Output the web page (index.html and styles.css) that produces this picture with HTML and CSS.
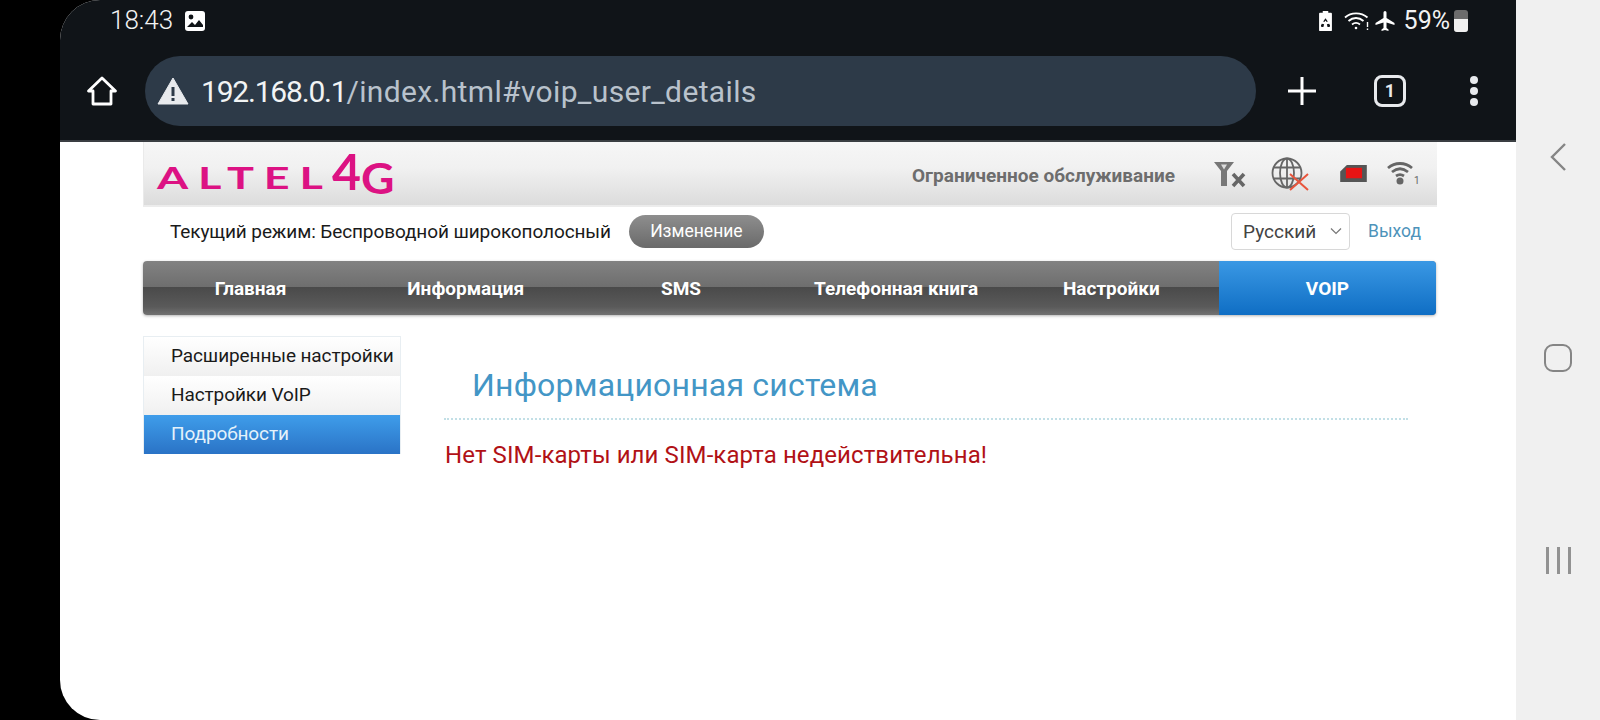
FILE: index.html
```html
<!DOCTYPE html>
<html lang="en">
<head>
    <meta charset="UTF-8">
    <title>Altel 4G - VoIP</title>
    <link rel="stylesheet" href="styles.css">
</head>
<body>

<div class="screen">
    <div class="chrome">
        <div class="status-bar">
            <div class="status-left">
                <span class="clock">18:43</span>
                <svg class="pic-icon" viewBox="0 0 22 22"><rect x="1" y="1" width="20" height="20" rx="3" fill="#fff"/><circle cx="7" cy="7" r="2.4" fill="#101418"/><path d="M3 17l5-5 3 3 4-5 4 5v2H3z" fill="#101418"/></svg>
            </div>
            <div class="status-right">
                <svg class="saver-icon" viewBox="0 0 16 24"><path d="M5 1h6v2h3a1 1 0 0 1 1 1v18a1 1 0 0 1-1 1H2a1 1 0 0 1-1-1V4a1 1 0 0 1 1-1h3z" fill="#fff"/><path d="M8 9l2.500 3.500-1.200.5L8 11.500 6.700 13l-1.200-.5zM4 15l2.500.5-.8 3H3.500L3 17zM12 15l1 2-.5 1.500h-2.300l-.7-3z" fill="#101418"/></svg>
                <svg class="wifi-icon" viewBox="0 0 26 20" fill="none" stroke="#fff" stroke-width="1.800"><path d="M1 6.500C7 1 17 1 23.500 6.500"/><path d="M4.500 10C9 6 15 6 19.500 10"/><path d="M8 13.500c2.500-2 5.500-2 8 0"/><circle cx="12" cy="17" r="1.300" fill="#fff" stroke="none"/><path d="M23.500 11v5M23.500 17.500v1.500" stroke-width="1.400"/></svg>
                <svg class="plane-icon" viewBox="0 0 24 24"><path d="M21 16v-2l-8-5V3.500a1.500 1.500 0 0 0-3 0V9l-8 5v2l8-2.500V19l-2 1.500V22l3.500-1 3.500 1v-1.500L13 19v-5.500z" fill="#fff" transform="translate(0.500 0)"/></svg>
                <span class="battery-text">59%</span>
                <div class="battery"><div class="battery-fill"></div></div>
            </div>
        </div>
        <div class="toolbar">
            <svg class="home-icon" viewBox="0 0 32 32" fill="none" stroke="#fff" stroke-width="2.800" stroke-linejoin="round"><path d="M16 3L2.500 16H7v13h18V16h4.500z"/></svg>
            <div class="url-bar">
                <svg class="warn-icon" viewBox="0 0 32 28"><path d="M16 1L31 27H1z" fill="#e8eaed" stroke="#e8eaed" stroke-linejoin="round"/><path d="M14.500 10h3v9h-3zM14.500 21h3v3h-3z" fill="#2d3a48"/></svg>
                <span class="url"><span class="url-host">192.168.0.1</span>/index.html#voip_user_details</span>
            </div>
            <svg class="plus-icon" viewBox="0 0 30 30" stroke="#fff" stroke-width="3"><path d="M15 1v28M1 15h28"/></svg>
            <div class="tab-count">1</div>
            <div class="menu-dots"><span></span><span></span><span></span></div>
        </div>
    </div>

    <div class="page">
        <div class="logo-bar">
            <div class="logo"><span class="logo-name">ALTEL</span><span class="logo-four">4</span><span class="logo-g">G</span></div>
            <div class="signal-info">
                <span class="service-text">Ограниченное обслуживание</span>
                <svg class="sig-icon" viewBox="0 0 32 28"><path d="M0 2h20l-7 9v15H7V11z" fill="#777"/><path d="M7 4.500l3 5 3-5z" fill="#ddd"/><path d="M19 14l11 12M30 14L19 26" stroke="#666" stroke-width="3.600"/></svg>
                <svg class="globe-icon" viewBox="0 0 42 34" fill="none" stroke="#666" stroke-width="1.800"><circle cx="16" cy="16" r="14.500"/><ellipse cx="16" cy="16" rx="7" ry="14.500"/><path d="M16 1.500v29M3 10.500h26M3 21.500h26"/><path d="M19 17l18 16M37 17L19 33" stroke="#e8553c" stroke-width="2"/></svg>
                <svg class="sim-icon" viewBox="0 0 30 20"><path d="M8 1h21v18H1V8z" fill="#555"/><rect x="7" y="4" width="17" height="11" fill="#e81414"/></svg>
                <svg class="wifi-small" viewBox="0 0 34 24" fill="none" stroke="#666" stroke-width="2.800"><path d="M1 7c7-6 17-6 24 0"/><path d="M5 11c5-4 11-4 16 0"/><path d="M9 15c3-2 5-2 8 0"/><circle cx="13" cy="20" r="3.500" fill="#666" stroke="none"/><text x="27" y="23" class="wifi-num">1</text></svg>
            </div>
        </div>

        <div class="mode-row">
            <span class="mode-text">Текущий режим: Беспроводной широкополосный</span>
            <button class="change-button">Изменение</button>
            <div class="lang-area">
                <div class="lang-select">Русский<svg class="chevron" viewBox="0 0 12 8" fill="none" stroke="#777" stroke-width="1.200"><path d="M1 1.500l5 5 5-5"/></svg></div>
                <a class="logout">Выход</a>
            </div>
        </div>

        <div class="main-nav">
            <div class="nav-item">Главная</div>
            <div class="nav-item">Информация</div>
            <div class="nav-item">SMS</div>
            <div class="nav-item">Телефонная книга</div>
            <div class="nav-item">Настройки</div>
            <div class="nav-item active">VOIP</div>
        </div>

        <div class="content">
            <div class="side-menu">
                <div class="side-item">Расширенные настройки</div>
                <div class="side-item">Настройки VoIP</div>
                <div class="side-item selected">Подробности</div>
            </div>
            <div class="details">
                <h1>Информационная система</h1>
                <p class="error-text">Нет SIM-карты или SIM-карта недействительна!</p>
            </div>
        </div>
    </div>
</div>

<div class="system-nav">
    <svg class="back-icon" viewBox="0 0 18 30" fill="none" stroke="#858585" stroke-width="2.400"><path d="M16 2L3 15l13 13"/></svg>
    <div class="home-button"></div>
    <div class="recents"><span></span><span></span><span></span></div>
</div>

</body>
</html>
```

FILE: styles.css
```css
* {
    box-sizing: border-box;
}

html, body {
    height: 720px;
    overflow: hidden;
}

body {
    margin: 0;
    background-color: #000;
    font-family: Roboto, "Liberation Sans", sans-serif;
    display: flex;
    padding-left: 60px;
}

.screen {
    width: 1456px;
    height: 720px;
    background-color: #fff;
    border-radius: 40px 0 0 40px;
    overflow: hidden;
    flex-shrink: 0;
}

/* Browser chrome */
.chrome {
    height: 142px;
    background-color: #101418;
    border-bottom: 2px solid #3a3e42;
}

.status-bar {
    height: 56px;
    display: flex;
    justify-content: space-between;
    padding: 6px 48px 0 50px;
}

.status-left, .status-right {
    display: flex;
    align-items: flex-start;
    color: #f2f2f2;
}

.clock {
    font-size: 26px;
    line-height: 29px;
    font-weight: 300;
}

.pic-icon {
    width: 22px;
    height: 22px;
    margin: 4px 0 0 11px;
}

.saver-icon {
    width: 15px;
    height: 22px;
    margin: 4px 11px 0 0;
}

.wifi-icon {
    width: 26px;
    height: 22px;
    margin: 4px 3px 0 0;
}

.plane-icon {
    width: 24px;
    height: 24px;
    margin: 3px 7px 0 0;
}

.battery-text {
    font-size: 25px;
    line-height: 29px;
}

.battery {
    width: 14px;
    height: 22px;
    margin: 4px 0 0 4px;
    background-color: #6c6c6c;
    border-radius: 3px;
    display: flex;
    align-items: flex-end;
    overflow: hidden;
}

.battery-fill {
    width: 100%;
    height: 59%;
    background-color: #f0f0f0;
}

.toolbar {
    height: 70px;
    display: flex;
    align-items: center;
}

.home-icon {
    width: 32px;
    height: 32px;
    margin-left: 26px;
    flex-shrink: 0;
}

.url-bar {
    width: 1111px;
    height: 70px;
    margin-left: 27px;
    background-color: #2d3a48;
    border-radius: 35px;
    display: flex;
    align-items: center;
    padding-left: 12px;
}

.warn-icon {
    width: 32px;
    height: 28px;
    flex-shrink: 0;
}

.url {
    margin-left: 12px;
    font-size: 30px;
    letter-spacing: 0.350px;
    color: #b9c2cc;
    white-space: nowrap;
}

.url-host {
    color: #f1f3f4;
    letter-spacing: -1.200px;
}

.plus-icon {
    width: 30px;
    height: 30px;
    margin-left: 31px;
}

.tab-count {
    width: 32px;
    height: 32px;
    margin-left: 57px;
    border: 3px solid #e8eaed;
    border-radius: 8px;
    color: #e8eaed;
    font-size: 18px;
    font-weight: 700;
    text-align: center;
    line-height: 25px;
}

.menu-dots {
    display: flex;
    flex-direction: column;
    gap: 3px;
    margin-left: 64px;
}

.menu-dots span {
    width: 8px;
    height: 8px;
    border-radius: 50%;
    background-color: #e8eaed;
}

/* Router page */
.page {
    padding-left: 83px;
    width: 1377px;
}

.logo-bar {
    height: 65px;
    background: linear-gradient(#f6f6f6, #f1f1f1 40%, #dcdcdc);
    border-bottom: 2px solid #ececec;
    border-left: 1px solid #eaeaea;
    display: flex;
    justify-content: space-between;
    align-items: center;
    padding-right: 16px;
}

.logo {
    display: flex;
    align-items: flex-start;
    height: 64px;
    color: #dc1283;
    margin-left: 13px;
    font-family: Lato, sans-serif;
    font-weight: 700;
}

.logo-name {
    width: 116px;
    font-size: 30px;
    letter-spacing: 6.500px;
    line-height: 34px;
    margin: 18px 59px 0 0;
    transform: scaleX(1.5);
    transform-origin: left;
}

.logo-four {
    font-size: 50px;
    line-height: 50px;
    margin-top: 4px;
}

.logo-g {
    font-size: 42px;
    line-height: 42px;
    margin-top: 15px;
    transform: scaleX(1.1);
    transform-origin: left;
}

.signal-info {
    display: flex;
    align-items: center;
}

.service-text {
    font-size: 19px;
    font-weight: 700;
    color: #6d6d6d;
    margin: 4px 39px 0 0;
}

.sig-icon {
    width: 32px;
    height: 28px;
    margin-right: 25px;
}

.globe-icon {
    width: 42px;
    height: 34px;
    margin-right: 26px;
}

.sim-icon {
    width: 29px;
    height: 19px;
    margin-right: 19px;
}

.wifi-small {
    width: 34px;
    height: 24px;
    margin-bottom: 2px;
}

.wifi-num {
    font-family: Roboto, sans-serif;
    font-size: 10px;
    fill: #666;
    stroke: none;
}

.mode-row {
    height: 54px;
    display: flex;
    align-items: center;
    padding-left: 27px;
    padding-bottom: 6px;
}

.mode-text {
    font-size: 19px;
    letter-spacing: -0.100px;
    color: #1a1a1a;
}

.change-button {
    width: 135px;
    height: 33px;
    margin-left: 18px;
    border: none;
    border-radius: 17px;
    background: linear-gradient(#8e8e8e, #6a6a6a);
    color: #fff;
    font-family: inherit;
    font-size: 17.500px;
}

.lang-area {
    margin-left: auto;
    display: flex;
    align-items: center;
    margin-right: 16px;
}

.lang-select {
    width: 119px;
    height: 37px;
    background-color: #fff;
    border: 1px solid #d8d8d8;
    border-radius: 4px;
    color: #444;
    font-size: 19px;
    display: flex;
    align-items: center;
    padding-left: 11px;
}

.chevron {
    width: 12px;
    height: 8px;
    margin-left: auto;
    margin-right: 7px;
}

.logout {
    margin-left: 18px;
    font-size: 17.500px;
    color: #4d93ba;
}

.main-nav {
    height: 54px;
    width: 1293px;
    display: grid;
    grid-template-columns: repeat(5, 215.200px) 1fr;
    border-radius: 4px;
    overflow: hidden;
    box-shadow: 0 1px 3px rgba(0, 0, 0, 0.3);
    background: linear-gradient(#828282 0, #6e6e6e 48%, #4a4a4a 49%, #5a5a5a 85%, #727272 100%);
}

.nav-item {
    color: #fff;
    font-size: 19px;
    font-weight: 700;
    display: flex;
    align-items: center;
    justify-content: center;
}

.nav-item.active {
    background: linear-gradient(#3a98e4, #0f6ec4);
}

.content {
    display: flex;
    margin-top: 21px;
}

.side-menu {
    width: 258px;
    height: 118px;
    border: 1px solid #e8eef2;
    flex-shrink: 0;
}

.side-item {
    height: 39px;
    padding-left: 27px;
    font-size: 19px;
    line-height: 38px;
    color: #1a1a1a;
    background: linear-gradient(#fff, #f0f0f0);
    white-space: nowrap;
    letter-spacing: -0.100px;
}

.side-item.selected {
    background: linear-gradient(#3f9dea, #2a73c6);
    color: #e4f2fb;
}

.details {
    width: 964px;
    margin-left: 43px;
}

.details h1 {
    margin: 31px 0 0;
    padding: 0 0 15px 28px;
    font-size: 32px;
    font-weight: 400;
    line-height: 36px;
    color: #4396c6;
    border-bottom: 2px dotted #c2dfe6;
    letter-spacing: 0.200px;
}

.error-text {
    margin: 21px 0 0 1px;
    font-size: 24px;
    line-height: 28px;
    letter-spacing: 0.100px;
    color: #b11116;
}

/* Android nav bar */
.system-nav {
    width: 84px;
    height: 720px;
    background-color: #f0f0f0;
    display: flex;
    flex-direction: column;
    align-items: center;
    flex-shrink: 0;
}

.back-icon {
    width: 18px;
    height: 30px;
    margin-top: 142px;
}

.home-button {
    width: 28px;
    height: 28px;
    margin-top: 172px;
    border: 2.500px solid #858585;
    border-radius: 9px;
}

.recents {
    display: flex;
    gap: 8px;
    margin-top: 175px;
}

.recents span {
    width: 3px;
    height: 27px;
    background-color: #929292;
}
```
